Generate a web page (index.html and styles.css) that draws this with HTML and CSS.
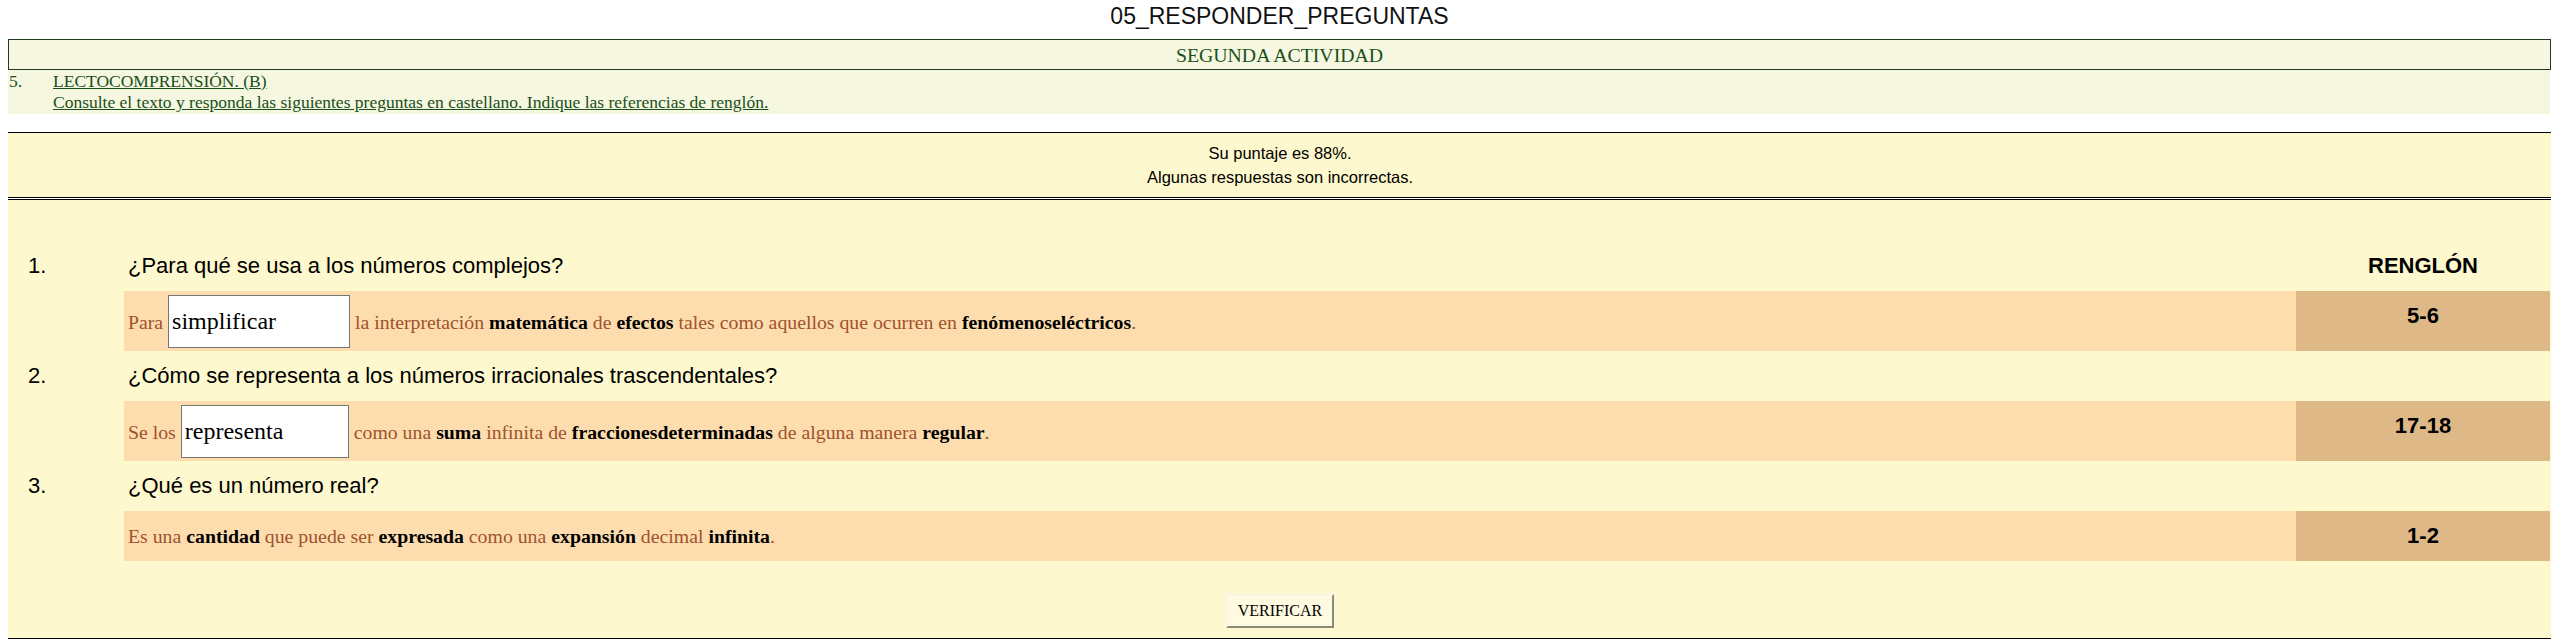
FILE: index.html
```html
<!DOCTYPE html>
<html lang="es">
<head>
<meta charset="utf-8">
<title>05_RESPONDER_PREGUNTAS</title>
<link rel="stylesheet" href="styles.css">
</head>
<body>
<h1 class="page-title">05_RESPONDER_PREGUNTAS</h1>
<div class="activity-title">SEGUNDA ACTIVIDAD</div>
<div class="instructions">
  <span class="instr-num">5.</span>
  <a class="instr-link" href="#">LECTOCOMPRENSIÓN. (B)</a>
  <span></span>
  <a class="instr-link" href="#">Consulte el texto y responda las siguientes preguntas en castellano. Indique las referencias de renglón.</a>
</div>
<div class="score">
  <p>Su puntaje es 88%.</p>
  <p>Algunas respuestas son incorrectas.</p>
</div>
<form class="quiz">
  <div class="q-row">
    <span class="q-num">1.</span>
    <span class="q-text">¿Para qué se usa a los números complejos?</span>
    <span class="ref-head">RENGLÓN</span>
  </div>
  <div class="a-row">
    <span></span>
    <div class="answer"><p class="answer-text">Para <input class="gap gap-a" type="text" value="simplificar"> la interpretación <b>matemática</b> de <b>efectos</b> tales como aquellos que ocurren en <b>fenómenoseléctricos</b>.</p></div>
    <div class="ref ref-top">5-6</div>
  </div>
  <div class="q-row">
    <span class="q-num">2.</span>
    <span class="q-text">¿Cómo se representa a los números irracionales trascendentales?</span>
    <span></span>
  </div>
  <div class="a-row">
    <span></span>
    <div class="answer"><p class="answer-text">Se los <input class="gap gap-b" type="text" value="representa"> como una <b>suma</b> infinita de <b>fraccionesdeterminadas</b> de alguna manera <b>regular</b>.</p></div>
    <div class="ref ref-top">17-18</div>
  </div>
  <div class="q-row">
    <span class="q-num">3.</span>
    <span class="q-text">¿Qué es un número real?</span>
    <span></span>
  </div>
  <div class="a-row">
    <span></span>
    <div class="answer"><p class="answer-text">Es una <b>cantidad</b> que puede ser <b>expresada</b> como una <b>expansión</b> decimal <b>infinita</b>.</p></div>
    <div class="ref">1-2</div>
  </div>
  <div class="actions">
    <button type="button" class="verify">VERIFICAR</button>
  </div>
</form>
</body>
</html>
```

FILE: styles.css
```css
html, body {
  background: #ffffff;
}

body {
  margin: 0 8px;
  font-family: "Liberation Serif", "Times New Roman", serif;
  color: #000;
}

.page-title {
  margin: 0 0 10px;
  padding-top: 3px;
  font-family: "Liberation Sans", Arial, sans-serif;
  font-weight: normal;
  font-size: 23px;
  line-height: 26px;
  text-align: center;
  color: #111;
}

.activity-title {
  border: 1px solid #1e3d1e;
  background: #f5f7e1;
  padding: 4px 0 3px;
  font-size: 19.8px;
  line-height: 22px;
  text-align: center;
  color: #1a4f1a;
}

.instructions {
  display: grid;
  grid-template-columns: 44px 1fr;
  margin-right: 1px;
  padding: 1px 0 1px 1px;
  background: #f5f7e1;
  font-size: 17.5px;
  line-height: 21px;
  color: #1a4f1a;
}

.instr-link {
  color: #1a4f1a;
  text-decoration: underline;
}

.score {
  margin: 18px -8px 0;
  padding: 8px 0;
  border: 1px solid #000;
  border-right: none;
  background: #fdf8cd;
  font-family: "Liberation Sans", Arial, sans-serif;
  font-size: 16.5px;
  line-height: 24px;
  text-align: center;
}

.score p {
  margin: 0;
}

.quiz {
  margin: 1px -8px 0;
  padding: 41px 0 10px;
  border: 1px solid #000;
  border-right: none;
  background: #fdf8cd;
}

.q-row,
.a-row {
  display: grid;
  grid-template-columns: 123px 1fr 254px;
  margin-right: 9px;
}

.q-row {
  height: 50px;
  align-items: center;
  font-family: "Liberation Sans", Arial, sans-serif;
  font-size: 22px;
}

.q-num {
  padding-left: 27px;
}

.q-text {
  padding-left: 4px;
}

.ref-head {
  text-align: center;
  font-weight: bold;
}

.answer {
  display: flex;
  align-items: center;
  box-sizing: border-box;
  min-height: 50px;
  padding: 3.5px 4px;
  background: #fdddad;
}

.answer-text {
  margin: 0;
  font-size: 19.8px;
  color: #a0522d;
}

.answer-text b {
  color: #000;
}

.gap {
  box-sizing: border-box;
  height: 53px;
  margin: 0;
  padding: 1px 3px;
  border: 1px solid #767676;
  background: #fff;
  font-family: "Liberation Serif", "Times New Roman", serif;
  font-size: 24px;
  color: #000;
}

.gap-a {
  width: 182px;
}

.gap-b {
  width: 168px;
}

.ref {
  display: flex;
  justify-content: center;
  align-items: center;
  background: #deb887;
  font-family: "Liberation Sans", Arial, sans-serif;
  font-size: 22px;
  font-weight: bold;
}

.ref-top {
  align-items: flex-start;
  padding-top: 12px;
}

.actions {
  display: flex;
  justify-content: center;
  margin-top: 33px;
}

.verify {
  padding: 6px 10px;
  border-style: solid;
  border-width: 2px;
  border-color: #f7f5e4 #8a8a78 #8a8a78 #f7f5e4;
  background: #fefbe0;
  font-family: "Liberation Serif", "Times New Roman", serif;
  font-size: 16px;
  line-height: 18px;
  color: #000;
}
```
